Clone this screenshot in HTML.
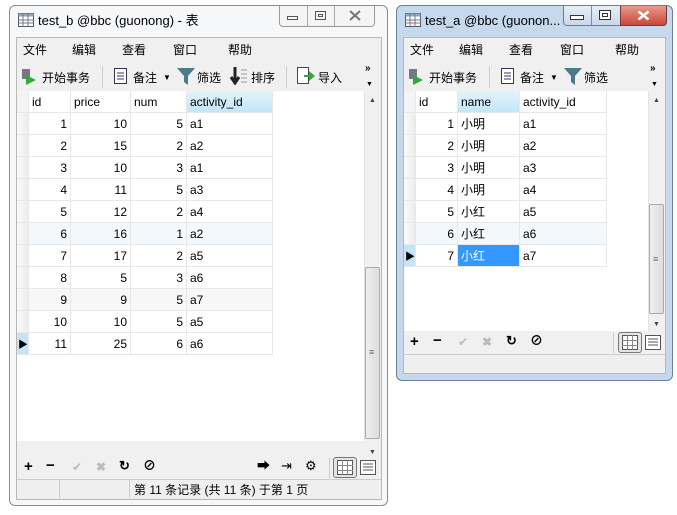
<!DOCTYPE html>
<html><head><meta charset="utf-8"><style>
*{margin:0;padding:0;box-sizing:border-box}
body{width:677px;height:515px;background:#fff;position:relative;overflow:hidden;font-family:"Liberation Sans","Noto Sans CJK SC",sans-serif;font-size:12px;color:#000}
.a{position:absolute}
.win{position:absolute;border:1px solid #8a8a8a;border-radius:6px}
.client{position:absolute;background:#f0f0f0;border:1px solid #b8b8b8}
.t{position:absolute;white-space:nowrap;font-size:12px;line-height:14px}
.grid{position:absolute;background:#fff}
.cell{position:absolute;border-right:1px solid #e8e8e8;border-bottom:1px solid #e8e8e8;height:22px;line-height:23px;padding:0 3px;white-space:nowrap}
.r{text-align:right}
.ico{position:absolute}
</style></head><body>

<!-- LEFT WINDOW -->
<div class="win" style="left:9px;top:5px;width:379px;height:501px;background:#f6f7f9;border-color:#8c8c8c"></div>
<svg class="ico" style="left:18px;top:13px" width="16" height="14"><rect x="0.5" y="0.5" width="15" height="13" fill="#fff" stroke="#556"/><rect x="0.5" y="0.5" width="15" height="3" fill="#8ab"/><path d="M0 7h16M0 10h16M5 0v14M10 0v14" stroke="#778" stroke-width="1"/></svg>
<div class="t" style="left:38px;top:14px;font-size:13px">test_b @bbc (guonong) - 表</div>
<div class="a" style="left:279px;top:6px;width:96px;height:21px;border:1px solid #999;border-top:none;border-radius:0 0 4px 4px;background:#f4f4f4"></div>
<div class="a" style="left:307px;top:6px;width:1px;height:20px;background:#aaa"></div>
<div class="a" style="left:334px;top:6px;width:1px;height:20px;background:#aaa"></div>
<div class="a" style="left:287px;top:16px;width:11px;height:4px;border:1px solid #555"></div>
<div class="a" style="left:315px;top:11px;width:11px;height:9px;border:1px solid #555"><div style="margin:2px;border:1px solid #555;height:3px"></div></div>
<svg class="ico" style="left:349px;top:10px" width="12" height="11"><path d="M1 1l10 9M11 1L1 10" stroke="#777" stroke-width="2"/></svg>

<div class="client" style="left:16px;top:37px;width:366px;height:463px"></div>
<div class="t" style="left:23px;top:43px">文件</div>
<div class="t" style="left:72px;top:43px">编辑</div>
<div class="t" style="left:122px;top:43px">查看</div>
<div class="t" style="left:173px;top:43px">窗口</div>
<div class="t" style="left:228px;top:43px">帮助</div>
<svg class="ico" style="left:21px;top:68px" width="16" height="18"><rect x="1" y="1" width="8" height="10" fill="#778"/><path d="M5 7l10 5-10 5z" fill="#3a3"/></svg>
<div class="t" style="left:42px;top:71px">开始事务</div>
<div class="a" style="left:102px;top:66px;width:1px;height:22px;background:#ccc"></div>
<svg class="ico" style="left:114px;top:68px" width="13" height="16"><rect x="0.5" y="0.5" width="12" height="15" fill="#fff" stroke="#335"/><path d="M3 5h7M3 8h7M3 11h7" stroke="#336"/></svg>
<div class="t" style="left:133px;top:71px">备注</div>
<div class="t" style="left:163px;top:71px;font-size:8px">▼</div>
<svg class="ico" style="left:177px;top:68px" width="18" height="17"><path d="M0 0h18l-7 8v9l-4-3v-6z" fill="#4a7a8c"/></svg>
<div class="t" style="left:197px;top:71px">筛选</div>
<svg class="ico" style="left:230px;top:67px" width="18" height="18"><path d="M5 0v13M1 10l4 6 4-6" stroke="#222" stroke-width="3" fill="none"/><path d="M11 3h6M11 7h6M11 11h6M11 15h6" stroke="#999"/></svg>
<div class="t" style="left:251px;top:71px">排序</div>
<div class="a" style="left:286px;top:66px;width:1px;height:22px;background:#ccc"></div>
<svg class="ico" style="left:297px;top:67px" width="18" height="18"><rect x="0.5" y="0.5" width="11" height="16" fill="#fff" stroke="#445"/><path d="M7 8h5V4l6 5-6 5v-4H7z" fill="#3a3"/></svg>
<div class="t" style="left:318px;top:71px">导入</div>
<div class="t" style="left:365px;top:62px;font-size:10px;font-weight:bold">»</div>
<div class="t" style="left:366px;top:78px;font-size:7px">▼</div>

<div class="grid" style="left:17px;top:91px;width:347px;height:350px"></div>
<div id="lg"></div>
<div class="a" style="left:364px;top:91px;width:17px;height:350px;background:#f0f0f0;border-left:1px solid #e4e4e4"></div>
<div class="t" style="left:369px;top:94px;font-size:7px;color:#444">▲</div>
<div class="a" style="left:365px;top:267px;width:15px;height:172px;background:linear-gradient(90deg,#eee,#ddd);border:1px solid #aaa;border-radius:2px"></div>
<div class="t" style="left:369px;top:345px;font-size:9px;color:#666">≡</div>
<div class="t" style="left:369px;top:446px;font-size:7px;color:#444">▼</div>
<div class="t" style="left:24px;top:460px;font-size:15px;font-weight:bold">+</div>
<div class="t" style="left:46px;top:459px;font-size:15px;font-weight:bold">−</div>
<div class="t" style="left:72px;top:460px;color:#bbb">✔</div>
<div class="t" style="left:96px;top:460px;color:#bbb;font-weight:bold">✖</div>
<div class="t" style="left:119px;top:459px;font-weight:bold;font-size:13px">↻</div>
<div class="t" style="left:143px;top:459px;font-weight:bold;font-size:13px">⊘</div>
<div class="t" style="left:257px;top:459px;font-size:13px">➡</div>
<div class="t" style="left:281px;top:459px;font-size:13px">⇥</div>
<div class="t" style="left:305px;top:459px;font-size:13px">⚙</div>
<div class="a" style="left:329px;top:458px;width:1px;height:20px;background:#ccc"></div>
<div class="a" style="left:333px;top:457px;width:24px;height:21px;border:1px solid #777;border-radius:3px;background:#e4e4e4"></div>
<svg class="ico" style="left:337px;top:460px" width="16" height="15"><rect x="0.5" y="0.5" width="15" height="14" fill="#fff" stroke="#555"/><path d="M5.5 0v15M10.5 0v15M0 5.5h16M0 10.5h16" stroke="#888"/></svg>
<svg class="ico" style="left:360px;top:460px" width="16" height="15"><rect x="0.5" y="0.5" width="15" height="14" fill="#fff" stroke="#555"/><path d="M3 4h10M3 7h10M3 10h10" stroke="#555"/></svg>
<div class="a" style="left:17px;top:479px;width:364px;height:20px;background:#efefef;border-top:1px solid #ccc"></div>
<div class="a" style="left:59px;top:480px;width:1px;height:18px;background:#ccc"></div>
<div class="a" style="left:129px;top:480px;width:1px;height:18px;background:#ccc"></div>
<div class="t" style="left:134px;top:483px">第 11 条记录 (共 11 条) 于第 1 页</div>

<!-- RIGHT WINDOW -->
<div class="win" style="left:396px;top:5px;width:277px;height:376px;background:#c6d8ec;border-color:#6b7f96"></div>
<svg class="ico" style="left:405px;top:13px" width="16" height="14"><rect x="0.5" y="0.5" width="15" height="13" fill="#fff" stroke="#556"/><rect x="0.5" y="0.5" width="15" height="3" fill="#8ab"/><path d="M0 7h16M0 10h16M5 0v14M10 0v14" stroke="#778" stroke-width="1"/></svg>
<div class="t" style="left:425px;top:14px;font-size:13px">test_a @bbc (guonon...</div>
<div class="a" style="left:563px;top:6px;width:58px;height:20px;border:1px solid #6a7c92;border-top:none;border-radius:0 0 0 4px;background:linear-gradient(#e6eef8,#c9d7e8)"></div>
<div class="a" style="left:591px;top:6px;width:1px;height:19px;background:#889"></div>
<div class="a" style="left:620px;top:6px;width:47px;height:20px;border:1px solid #7a3a30;border-top:none;border-radius:0 0 4px 0;background:linear-gradient(#e89a8a,#c8483a)"></div>
<div class="a" style="left:570px;top:15px;width:14px;height:5px;border:1px solid #333;background:#fff"></div>
<div class="a" style="left:599px;top:10px;width:12px;height:10px;border:1px solid #333;background:#fff"><div style="margin:2px;border:1px solid #333;height:4px"></div></div>
<svg class="ico" style="left:637px;top:10px" width="13" height="11"><path d="M1.5 1.5l10 8M11.5 1.5l-10 8" stroke="#fff" stroke-width="2.5"/></svg>

<div class="client" style="left:403px;top:37px;width:263px;height:337px"></div>
<div class="t" style="left:410px;top:43px">文件</div>
<div class="t" style="left:459px;top:43px">编辑</div>
<div class="t" style="left:509px;top:43px">查看</div>
<div class="t" style="left:560px;top:43px">窗口</div>
<div class="t" style="left:615px;top:43px">帮助</div>
<svg class="ico" style="left:408px;top:68px" width="16" height="18"><rect x="1" y="1" width="8" height="10" fill="#778"/><path d="M5 7l10 5-10 5z" fill="#3a3"/></svg>
<div class="t" style="left:429px;top:71px">开始事务</div>
<div class="a" style="left:489px;top:66px;width:1px;height:22px;background:#ccc"></div>
<svg class="ico" style="left:501px;top:68px" width="13" height="16"><rect x="0.5" y="0.5" width="12" height="15" fill="#fff" stroke="#335"/><path d="M3 5h7M3 8h7M3 11h7" stroke="#336"/></svg>
<div class="t" style="left:520px;top:71px">备注</div>
<div class="t" style="left:550px;top:71px;font-size:8px">▼</div>
<svg class="ico" style="left:564px;top:68px" width="18" height="17"><path d="M0 0h18l-7 8v9l-4-3v-6z" fill="#4a7a8c"/></svg>
<div class="t" style="left:584px;top:71px">筛选</div>
<div class="t" style="left:650px;top:62px;font-size:10px;font-weight:bold">»</div>
<div class="t" style="left:651px;top:78px;font-size:7px">▼</div>

<div class="grid" style="left:404px;top:91px;width:244px;height:240px"></div>
<div id="rg"></div>
<div class="a" style="left:648px;top:91px;width:17px;height:240px;background:#f0f0f0;border-left:1px solid #e4e4e4"></div>
<div class="t" style="left:653px;top:94px;font-size:7px;color:#444">▲</div>
<div class="a" style="left:649px;top:204px;width:15px;height:110px;background:linear-gradient(90deg,#eee,#ddd);border:1px solid #aaa;border-radius:2px"></div>
<div class="t" style="left:653px;top:252px;font-size:9px;color:#666">≡</div>
<div class="t" style="left:653px;top:318px;font-size:7px;color:#444">▼</div>
<div class="t" style="left:410px;top:335px;font-size:15px;font-weight:bold">+</div>
<div class="t" style="left:433px;top:334px;font-size:15px;font-weight:bold">−</div>
<div class="t" style="left:458px;top:335px;color:#bbb">✔</div>
<div class="t" style="left:482px;top:335px;color:#bbb;font-weight:bold">✖</div>
<div class="t" style="left:506px;top:334px;font-weight:bold;font-size:13px">↻</div>
<div class="t" style="left:530px;top:334px;font-weight:bold;font-size:13px">⊘</div>
<div class="a" style="left:613px;top:333px;width:1px;height:20px;background:#ccc"></div>
<div class="a" style="left:618px;top:332px;width:24px;height:21px;border:1px solid #777;border-radius:3px;background:#e4e4e4"></div>
<svg class="ico" style="left:622px;top:335px" width="16" height="15"><rect x="0.5" y="0.5" width="15" height="14" fill="#fff" stroke="#555"/><path d="M5.5 0v15M10.5 0v15M0 5.5h16M0 10.5h16" stroke="#888"/></svg>
<svg class="ico" style="left:645px;top:335px" width="16" height="15"><rect x="0.5" y="0.5" width="15" height="14" fill="#fff" stroke="#555"/><path d="M3 4h10M3 7h10M3 10h10" stroke="#555"/></svg>
<div class="a" style="left:404px;top:354px;width:261px;height:19px;background:#efefef;border-top:1px solid #ccc"></div>

<script>
function grid(id,top,cols,hdr,rows,sel,hl,selcell){
 var h='';var y=top;
 var x0=cols[0];
 h+='<div class="cell" style="left:'+x0+'px;top:'+y+'px;width:'+(cols[1]-x0)+'px;background:#f4f4f4"></div>';
 for(var c=0;c<hdr.length;c++){var bg=(c==hdr.hl)?'background:linear-gradient(#e4f3fb,#c2e6f8)':'background:#fff';
  h+='<div class="cell" style="left:'+cols[c+1]+'px;top:'+y+'px;width:'+(cols[c+2]-cols[c+1])+'px;'+bg+'">'+hdr[c]+'</div>';}
 for(var r=0;r<rows.length;r++){y=top+22*(r+1);
  var rb=(r==hl)?'#f3f8fc':(r==8?'#f7f7f7':'#fff');
  var rn=(r==sel)?'background:#c6e4f6':'background:linear-gradient(90deg,#fafafa,#ececec)';
  h+='<div class="cell" style="left:'+x0+'px;top:'+y+'px;width:'+(cols[1]-x0)+'px;'+rn+';padding:0 1px">'+(r==sel?'<span style="font-size:10px">▶</span>':'')+'</div>';
  for(var c=0;c<rows[r].length;c++){var v=rows[r][c];var al=rows.align[c]?'r':'';var bg='background:'+rb;var col='';
   if(r==sel&&c==selcell){bg='background:#3399ff';col='color:#fff;';}
   h+='<div class="cell '+al+'" style="left:'+cols[c+1]+'px;top:'+y+'px;width:'+(cols[c+2]-cols[c+1])+'px;'+bg+';'+col+'">'+v+'</div>';}}
 document.getElementById(id).innerHTML=h;}
var L=[[1,10,5,'a1'],[2,15,2,'a2'],[3,10,3,'a1'],[4,11,5,'a3'],[5,12,2,'a4'],[6,16,1,'a2'],[7,17,2,'a5'],[8,5,3,'a6'],[9,9,5,'a7'],[10,10,5,'a5'],[11,25,6,'a6']];
L.align=[1,1,1,0];var lh=['id','price','num','activity_id'];lh.hl=3;
grid('lg',91,[17,29,71,131,187,273],lh,L,10,5,-1);
var R=[[1,'小明','a1'],[2,'小明','a2'],[3,'小明','a3'],[4,'小明','a4'],[5,'小红','a5'],[6,'小红','a6'],[7,'小红','a7']];
R.align=[1,0,0];var rh=['id','name','activity_id'];rh.hl=1;
grid('rg',91,[404,416,458,520,607],rh,R,6,5,1);
</script>
</body></html>
